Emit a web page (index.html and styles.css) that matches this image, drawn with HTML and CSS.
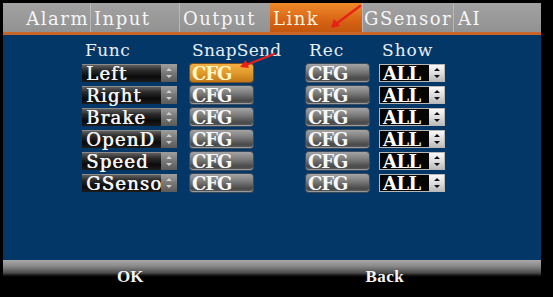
FILE: index.html
```html
<!DOCTYPE html>
<html>
<head>
<meta charset="utf-8">
<link rel="stylesheet" href="styles.css">
</head>
<body>
<div class="screen">
  <div class="tabs">
    <div class="tab tab-end">Alarm</div>
    <div class="tab">Input</div>
    <div class="tab">Output</div>
    <div class="tab active">Link</div>
    <div class="tab">GSensor</div>
    <div class="tab tab-ai">AI</div>
  </div>
  <div class="main">
    <div class="grid">
      <div class="hdr">Func</div>
      <div class="hdr">SnapSend</div>
      <div class="hdr">Rec</div>
      <div class="hdr">Show</div>

      <div class="sel"><span class="sel-text">Left</span><span class="spin"><svg viewBox="0 0 14 16" width="14" height="16"><path d="M4 6 L7 3 L10 6Z M4 10 L7 13 L10 10Z" fill="#cfcfcf"/></svg></span></div>
      <div class="btn btn-on">CFG</div>
      <div class="btn">CFG</div>
      <div class="show"><span class="show-text">ALL</span><span class="spin-w"><svg viewBox="0 0 14 16" width="14" height="16"><path d="M4 6 L7 3 L10 6Z M4 10 L7 13 L10 10Z" fill="#111"/></svg></span></div>

      <div class="sel"><span class="sel-text">Right</span><span class="spin"><svg viewBox="0 0 14 16" width="14" height="16"><path d="M4 6 L7 3 L10 6Z M4 10 L7 13 L10 10Z" fill="#cfcfcf"/></svg></span></div>
      <div class="btn">CFG</div>
      <div class="btn">CFG</div>
      <div class="show"><span class="show-text">ALL</span><span class="spin-w"><svg viewBox="0 0 14 16" width="14" height="16"><path d="M4 6 L7 3 L10 6Z M4 10 L7 13 L10 10Z" fill="#111"/></svg></span></div>

      <div class="sel"><span class="sel-text">Brake</span><span class="spin"><svg viewBox="0 0 14 16" width="14" height="16"><path d="M4 6 L7 3 L10 6Z M4 10 L7 13 L10 10Z" fill="#cfcfcf"/></svg></span></div>
      <div class="btn">CFG</div>
      <div class="btn">CFG</div>
      <div class="show"><span class="show-text">ALL</span><span class="spin-w"><svg viewBox="0 0 14 16" width="14" height="16"><path d="M4 6 L7 3 L10 6Z M4 10 L7 13 L10 10Z" fill="#111"/></svg></span></div>

      <div class="sel"><span class="sel-text">OpenD</span><span class="spin"><svg viewBox="0 0 14 16" width="14" height="16"><path d="M4 6 L7 3 L10 6Z M4 10 L7 13 L10 10Z" fill="#cfcfcf"/></svg></span></div>
      <div class="btn">CFG</div>
      <div class="btn">CFG</div>
      <div class="show"><span class="show-text">ALL</span><span class="spin-w"><svg viewBox="0 0 14 16" width="14" height="16"><path d="M4 6 L7 3 L10 6Z M4 10 L7 13 L10 10Z" fill="#111"/></svg></span></div>

      <div class="sel"><span class="sel-text">Speed</span><span class="spin"><svg viewBox="0 0 14 16" width="14" height="16"><path d="M4 6 L7 3 L10 6Z M4 10 L7 13 L10 10Z" fill="#cfcfcf"/></svg></span></div>
      <div class="btn">CFG</div>
      <div class="btn">CFG</div>
      <div class="show"><span class="show-text">ALL</span><span class="spin-w"><svg viewBox="0 0 14 16" width="14" height="16"><path d="M4 6 L7 3 L10 6Z M4 10 L7 13 L10 10Z" fill="#111"/></svg></span></div>

      <div class="sel"><span class="sel-text">GSenso</span><span class="spin"><svg viewBox="0 0 14 16" width="14" height="16"><path d="M4 6 L7 3 L10 6Z M4 10 L7 13 L10 10Z" fill="#cfcfcf"/></svg></span></div>
      <div class="btn">CFG</div>
      <div class="btn">CFG</div>
      <div class="show"><span class="show-text">ALL</span><span class="spin-w"><svg viewBox="0 0 14 16" width="14" height="16"><path d="M4 6 L7 3 L10 6Z M4 10 L7 13 L10 10Z" fill="#111"/></svg></span></div>
    </div>
  </div>
  <div class="footer">
    <span class="f-ok">OK</span>
    <span class="f-back">Back</span>
  </div>
</div>
<svg class="arrows" width="553" height="297" viewBox="0 0 553 297">
  <g stroke="#e8201a" stroke-width="2.2" fill="none" stroke-linecap="round">
    <path d="M360 6 L336 24"/>
    <path d="M274 54 L246 65"/>
  </g>
  <g fill="#e8201a">
    <path d="M331 28 L334 19 L340 26Z"/>
    <path d="M240 67 L246 60 L249 68Z"/>
  </g>
</svg>
</body>
</html>
```
FILE: styles.css
```css
html, body {
  margin: 0;
  padding: 0;
  background: #000;
}
body {
  width: 553px;
  height: 297px;
  overflow: hidden;
  position: relative;
  font-family: "DejaVu Serif", "Liberation Serif", serif;
  color: #f4f4f4;
}
.screen {
  margin-left: 3px;
  width: 538px;
  height: 297px;
  display: flex;
  flex-direction: column;
}
.tabs {
  margin-top: 3px;
  height: 29px;
  display: flex;
  background: linear-gradient(#a2a2a2, #929292);
  border-bottom: 3px solid #c8662a;
}
.tab {
  box-sizing: border-box;
  width: 90px;
  display: flex;
  align-items: center;
  padding-left: 3px;
  padding-top: 2px;
  font-size: 18px;
  letter-spacing: 1.5px;
  border-left: 1px solid #b8b8b8;
  color: #f6f6f6;
}
.tab:nth-child(1) { width: 87px; border-left: none; justify-content: flex-end; padding-right: 1px; }
.tab:nth-child(2) { width: 89px; }
.tab:nth-child(3) { width: 91px; }
.tab:nth-child(4) { width: 92px; }
.tab:nth-child(5) { width: 91px; padding-left: 1px; }
.tab:nth-child(6) { width: 88px; padding-left: 4px; }
.tab.active {
  background: linear-gradient(#f08a2a, #d86414 60%, #c4560e);
  border-left: none;
  color: #fff4e0;
}
.main {
  height: 225px;
  background: #023767;
  box-sizing: border-box;
  padding: 5px 0 0 79px;
}
.grid {
  display: grid;
  grid-template-columns: 108px 116px 73px 66px;
  grid-template-rows: 20px repeat(6, 18px);
  row-gap: 4px;
  align-items: start;
}
.hdr {
  font-size: 17px;
  line-height: 20px;
  padding-left: 3px;
  letter-spacing: 1px;
  color: #e8eef6;
}
.grid .hdr:nth-child(1) { letter-spacing: 0.5px; }
.grid .hdr:nth-child(2) { padding-left: 2px; letter-spacing: 0.3px; }
.sel {
  width: 95px;
  height: 18px;
  display: flex;
  background: linear-gradient(#6a6a6a, #2a2a2a 35%, #0a0a0a 70%, #1c1c1c);
  box-shadow: inset 0 1px 0 #8a8a8a;
}
.sel-text {
  width: 79px;
  flex: none;
  box-sizing: border-box;
  font-size: 18px;
  line-height: 19px;
  padding-left: 4px;
  letter-spacing: 1.2px;
  color: #f4f4f4;
  text-shadow: 0.6px 0 0 #f4f4f4;
  white-space: nowrap;
}
.spin {
  width: 16px;
  height: 18px;
  flex: none;
  display: flex;
  align-items: center;
  justify-content: center;
  background: linear-gradient(#a0a0a0, #777 50%, #5a5a5a);
}
.btn {
  box-sizing: border-box;
  width: 63px;
  height: 18px;
  border-radius: 3px;
  background: linear-gradient(#a4a4a4, #7c7c7c 40%, #4a4a4a 80%, #5a5a5a);
  box-shadow: inset 0 -1px 0 #9a9a9a, 0 0 0 1px #3a4a5a;
  font-size: 18px;
  font-weight: bold;
  line-height: 19px;
  padding-left: 2px;
  letter-spacing: -1px;
  color: #f8f8f8;
}
.btn-on {
  background: linear-gradient(#f4b040, #e09a2c 50%, #c27818);
  color: #fff6c8;
  box-shadow: 0 0 0 1px #7a5020;
}
.show {
  box-sizing: border-box;
  width: 66px;
  height: 18px;
  display: flex;
  background: #050505;
  border: 1px solid #b8b8b8;
}
.show-text {
  flex: 1;
  font-size: 18px;
  font-weight: bold;
  line-height: 17px;
  padding-left: 3px;
  letter-spacing: -0.5px;
  color: #fff;
}
.spin-w {
  width: 15px;
  height: 16px;
  flex: none;
  display: flex;
  align-items: center;
  justify-content: center;
  background: linear-gradient(#fafafa, #d8d8d8 60%, #bcbcbc);
}
.footer {
  height: 37px;
  display: flex;
  align-items: flex-start;
  background: linear-gradient(#a8a8a8 0, #8a8a8a 6px, #4a4a4a 13px, #1a1a1a 15px, #000 17px);
  font-family: "Liberation Serif", "DejaVu Serif", serif;
  font-weight: bold;
  font-size: 17px;
  line-height: 16px;
  padding-top: 9px;
  box-sizing: border-box;
}
.f-ok {
  margin-left: 114px;
}
.f-back {
  margin-left: 222px;
  letter-spacing: 0.5px;
}
.arrows {
  position: absolute;
  left: 0;
  top: 0;
  pointer-events: none;
}
```
